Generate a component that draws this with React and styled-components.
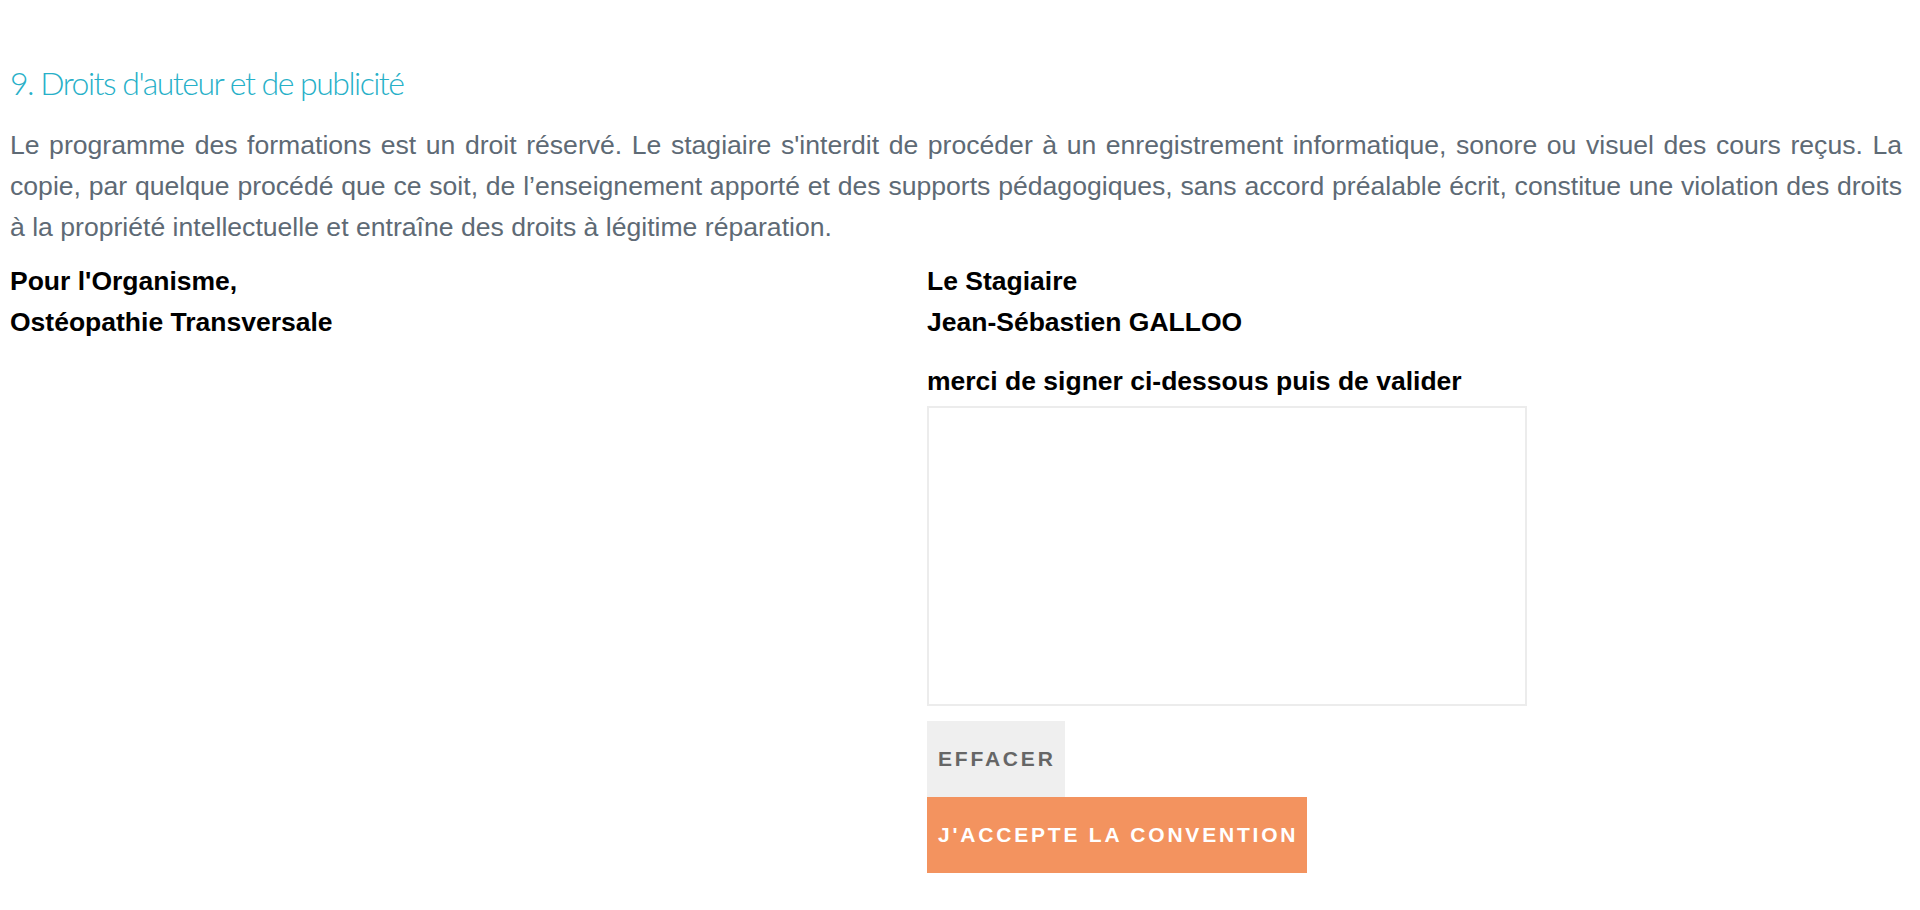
import React from "react";
import styled, { createGlobalStyle } from "styled-components";

const GlobalStyle = createGlobalStyle`
  html, body {
    margin: 0;
    padding: 0;
    background: #ffffff;
  }
  body {
    font-family: "Liberation Sans", Arial, Helvetica, sans-serif;
  }
`;

const Page = styled.div`
  padding: 63px 18px 40px 10px;
  box-sizing: border-box;
  width: 1920px;
`;

const Title = styled.h3`
  margin: 0;
  font-family: Lato, "Open Sans", sans-serif;
  font-weight: 300;
  font-size: 32px;
  line-height: 40px;
  letter-spacing: -1.5px;
  color: #27b0c8;
`;

const Text = styled.p`
  margin: 22px 0 0 0;
  font-size: 26.6px;
  line-height: 41px;
  color: #5e6a75;
  text-align: justify;
`;

const Signatures = styled.div`
  display: grid;
  grid-template-columns: 917px 1fr;
  margin-top: 13px;
`;

const Column = styled.div`
  display: flex;
  flex-direction: column;
  align-items: flex-start;
`;

const Label = styled.div`
  font-size: 26.5px;
  font-weight: 700;
  line-height: 41px;
  color: #000000;
  margin-top: ${(p) => p.$gap || 0}px;
`;

const Pad = styled.canvas`
  display: block;
  width: 600px;
  height: 300px;
  box-sizing: border-box;
  border: 2px solid #ececec;
  background: #ffffff;
  margin-top: 4px;
`;

const Button = styled.button`
  display: block;
  height: 76px;
  margin: 0;
  padding: 0 9px 0 11px;
  border: none;
  border-radius: 0;
  font-family: "Liberation Sans", Arial, Helvetica, sans-serif;
  font-size: 21px;
  font-weight: 700;
  letter-spacing: 2.8px;
  text-transform: uppercase;
  cursor: pointer;
  background: ${(p) => (p.$primary ? "#f3935f" : "#efefef")};
  color: ${(p) => (p.$primary ? "#ffffff" : "#666666")};
  margin-top: ${(p) => p.$gap || 0}px;
`;

export default function App() {
  return (
    <>
      <GlobalStyle />
      <Page>
        <Title>9. Droits d'auteur et de publicité</Title>
        <Text>
          Le programme des formations est un droit réservé. Le stagiaire s'interdit de
          procéder à un enregistrement informatique, sonore ou visuel des cours reçus. La
          copie, par quelque procédé que ce soit, de l’enseignement apporté et des supports
          pédagogiques, sans accord préalable écrit, constitue une violation des droits à la
          propriété intellectuelle et entraîne des droits à légitime réparation.
        </Text>
        <Signatures>
          <Column>
            <Label>Pour l'Organisme,</Label>
            <Label>Ostéopathie Transversale</Label>
          </Column>
          <Column>
            <Label>Le Stagiaire</Label>
            <Label>Jean-Sébastien GALLOO</Label>
            <Label $gap={18}>merci de signer ci-dessous puis de valider</Label>
            <Pad width="596" height="296" />
            <Button $gap={15}>Effacer</Button>
            <Button $primary>J'accepte la convention</Button>
          </Column>
        </Signatures>
      </Page>
    </>
  );
}
